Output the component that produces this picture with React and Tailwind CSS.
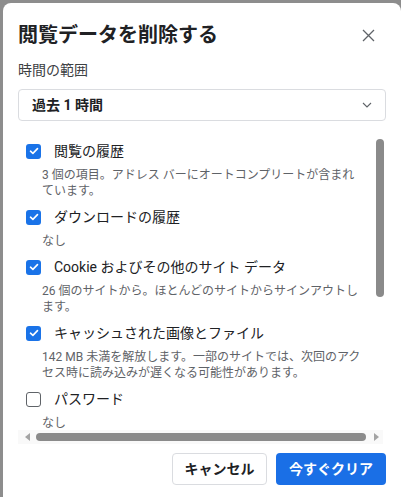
import React from "react";

const items = [
  {
    label: "閲覧の履歴",
    desc: ["3 個の項目。アドレス バーにオートコンプリートが含まれ", "ています。"],
    checked: true,
  },
  { label: "ダウンロードの履歴", desc: ["なし"], checked: true },
  {
    label: "Cookie およびその他のサイト データ",
    desc: ["26 個のサイトから。ほとんどのサイトからサインアウトし", "ます。"],
    checked: true,
  },
  {
    label: "キャッシュされた画像とファイル",
    desc: ["142 MB 未満を解放します。一部のサイトでは、次回のアク", "セス時に読み込みが遅くなる可能性があります。"],
    checked: true,
  },
  { label: "パスワード", desc: ["なし"], checked: false },
];

const Checkbox = ({ checked }) =>
  checked ? (
    <div className="w-[15px] h-[15px] rounded-[3px] bg-[#1a73e8] flex items-center justify-center shrink-0">
      <svg width="10" height="8" viewBox="0 0 10 8" fill="none">
        <path d="M1.5 4.2 L3.9 6.4 L8.5 1.6" stroke="white" strokeWidth="1.6" strokeLinecap="round" strokeLinejoin="round" />
      </svg>
    </div>
  ) : (
    <div className="w-[15px] h-[15px] rounded-[3px] border-[1.5px] border-[#5f6368] bg-white shrink-0" />
  );

const App = () => {
  return (
    <div
      className="min-h-[497px] bg-[#8d8d8d] pl-[3px] pt-[3px] overflow-hidden"
      style={{ fontFamily: 'Roboto, "Noto Sans CJK JP", sans-serif' }}
    >
      <div className="h-[494px] bg-white rounded-t-[8px] px-[15px] pt-[18px] flex flex-col">
        <header className="flex items-center justify-between h-[28px]">
          <h2 className="text-[20px] leading-[28px] font-bold text-[#202124]">閲覧データを削除する</h2>
          <svg width="13" height="13" viewBox="0 0 13 13" className="mr-[11px]">
            <path d="M1 1 L12 12 M12 1 L1 12" stroke="#5f6368" strokeWidth="1.3" />
          </svg>
        </header>

        <p className="mt-[11px] text-[14px] leading-5 text-[#3c4043]">時間の範囲</p>

        <div className="mt-[9px] h-[32px] border border-[#dadce0] rounded-[4px] flex items-center justify-between pl-[13px] pr-[13px]">
          <span className="text-[14px] font-bold text-[#202124]">過去 1 時間</span>
          <svg width="10" height="6" viewBox="0 0 10 6">
            <path d="M1 1 L5 5 L9 1" stroke="#5f6368" strokeWidth="1.1" fill="none" />
          </svg>
        </div>

        <div className="mt-[7px] flex flex-col">
          <div className="flex h-[302px]">
            <div className="flex-1 overflow-hidden pl-[8px] pt-[11px]">
              {items.map((item) => (
                <div key={item.label} className="mb-[6px]">
                  <div className="flex items-center h-[24px]">
                    <Checkbox checked={item.checked} />
                    <span className="ml-[13px] text-[14px] text-[#202124] whitespace-nowrap">{item.label}</span>
                  </div>
                  <p className="mt-[4px] ml-[16px] text-[12px] leading-4 text-[#5f6368] whitespace-nowrap">
                    {item.desc.map((line, i) => (
                      <span key={i} className="block">{line}</span>
                    ))}
                  </p>
                </div>
              ))}
            </div>
            <div className="w-[11px] pt-[11px] pl-[1px]">
              <div className="w-[8px] h-[158px] rounded-full bg-[#8a8a8a]" />
            </div>
          </div>
          <div className="h-[14px] flex items-center pl-[7px] bg-[#f9f9f9] mr-[3px]">
            <svg width="5" height="8" viewBox="0 0 5 8">
              <path d="M5 0 L0 4 L5 8 Z" fill="#a3a3a3" />
            </svg>
            <div className="ml-[6px] w-[330px] h-[8px] rounded-full bg-[#8a8a8a]" />
            <svg width="5" height="8" viewBox="0 0 5 8" className="ml-[8px]">
              <path d="M0 0 L5 4 L0 8 Z" fill="#a3a3a3" />
            </svg>
          </div>
        </div>

        <div className="mt-[9px] flex justify-end gap-[9px]">
          <button className="h-[32px] w-[95px] border border-[#dadce0] rounded-[4px] text-[14px] font-bold text-[#202124] bg-white">
            キャンセル
          </button>
          <button className="h-[32px] w-[110px] rounded-[4px] text-[14px] font-bold text-white bg-[#1a6fe6]">
            今すぐクリア
          </button>
        </div>
      </div>
    </div>
  );
};

export default App;
